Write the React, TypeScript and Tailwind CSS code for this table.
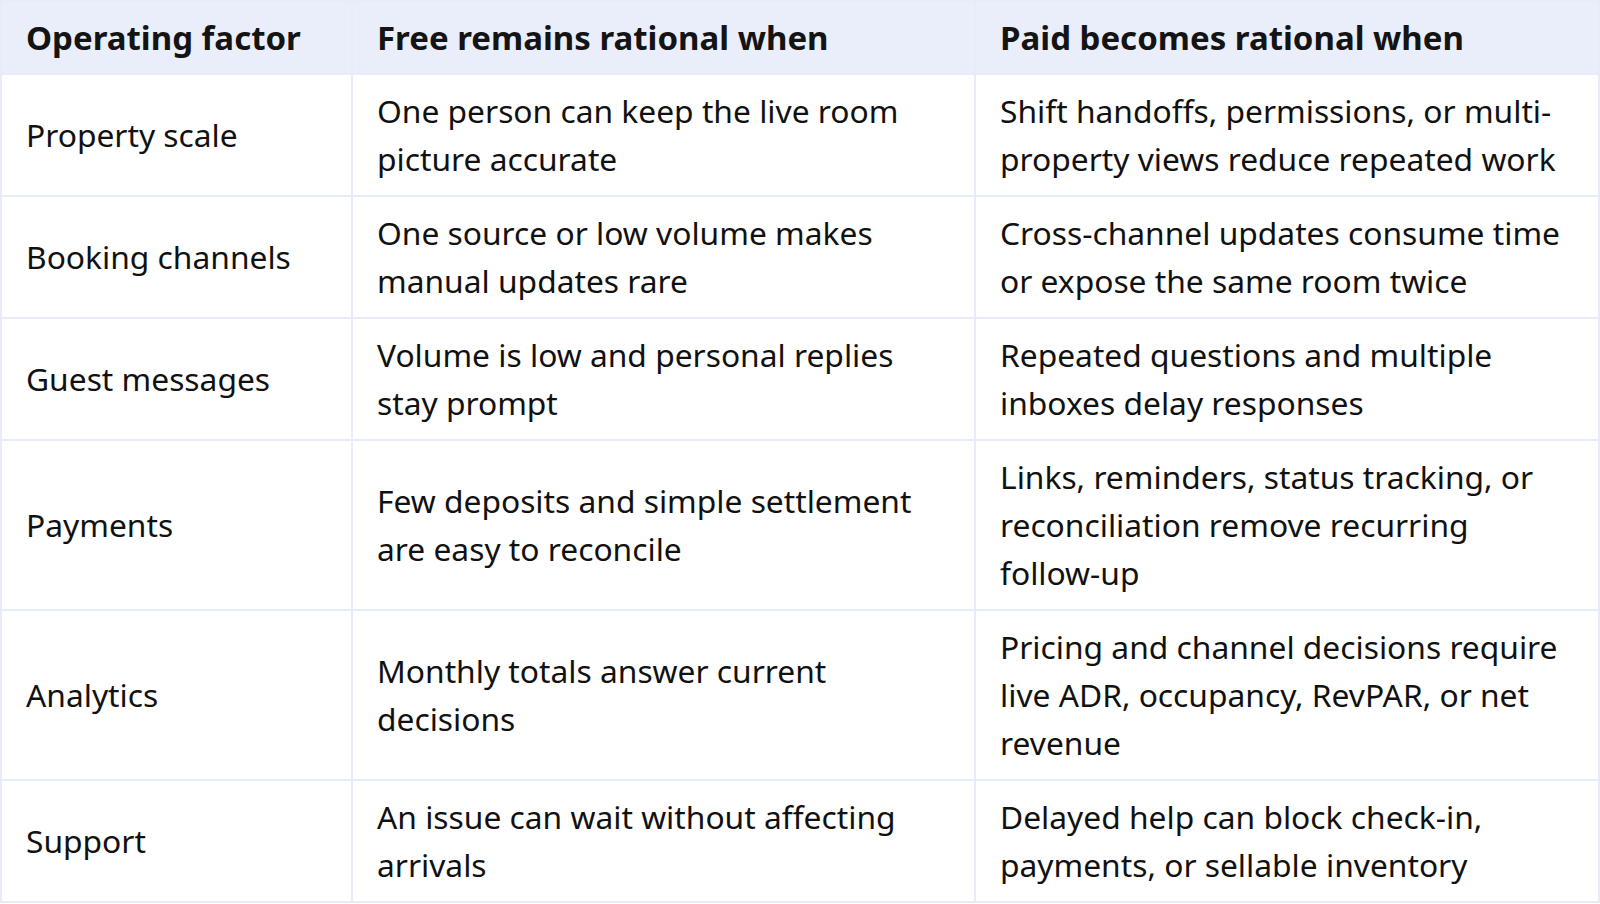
import React from "react";

const rows = [
  {
    factor: "Property scale",
    free: "One person can keep the live room picture accurate",
    paid: "Shift handoffs, permissions, or multi-property views reduce repeated work",
  },
  {
    factor: "Booking channels",
    free: "One source or low volume makes manual updates rare",
    paid: "Cross-channel updates consume time or expose the same room twice",
  },
  {
    factor: "Guest messages",
    free: "Volume is low and personal replies stay prompt",
    paid: "Repeated questions and multiple inboxes delay responses",
  },
  {
    factor: "Payments",
    free: "Few deposits and simple settlement are easy to reconcile",
    paid: "Links, reminders, status tracking, or reconciliation remove recurring follow-up",
  },
  {
    factor: "Analytics",
    free: "Monthly totals answer current decisions",
    paid: "Pricing and channel decisions require live ADR, occupancy, RevPAR, or net revenue",
  },
  {
    factor: "Support",
    free: "An issue can wait without affecting arrivals",
    paid: "Delayed help can block check-in, payments, or sellable inventory",
  },
];

const cell = "border-2 border-[#e8ecf9] px-6 py-3 align-middle";
const head = `${cell} text-left font-bold text-[33px] leading-[47px] text-[#141414]`;

export default function App() {
  return (
    <div
      className="w-[1600px] bg-white text-[31.75px] leading-[48px] text-[#111111]"
      style={{ fontFamily: '"Noto Sans", "Open Sans", sans-serif' }}
    >
      <table className="w-full table-fixed border-collapse">
        <colgroup>
          <col className="w-[351px]" />
          <col className="w-[623px]" />
          <col />
        </colgroup>
        <thead>
          <tr className="bg-[#eaeefb]">
            <th className={head}>Operating factor</th>
            <th className={head}>Free remains rational when</th>
            <th className={head}>Paid becomes rational when</th>
          </tr>
        </thead>
        <tbody>
          {rows.map((r) => (
            <tr key={r.factor}>
              <td className={cell}>{r.factor}</td>
              <td className={cell}>{r.free}</td>
              <td className={cell}>{r.paid}</td>
            </tr>
          ))}
        </tbody>
      </table>
    </div>
  );
}
